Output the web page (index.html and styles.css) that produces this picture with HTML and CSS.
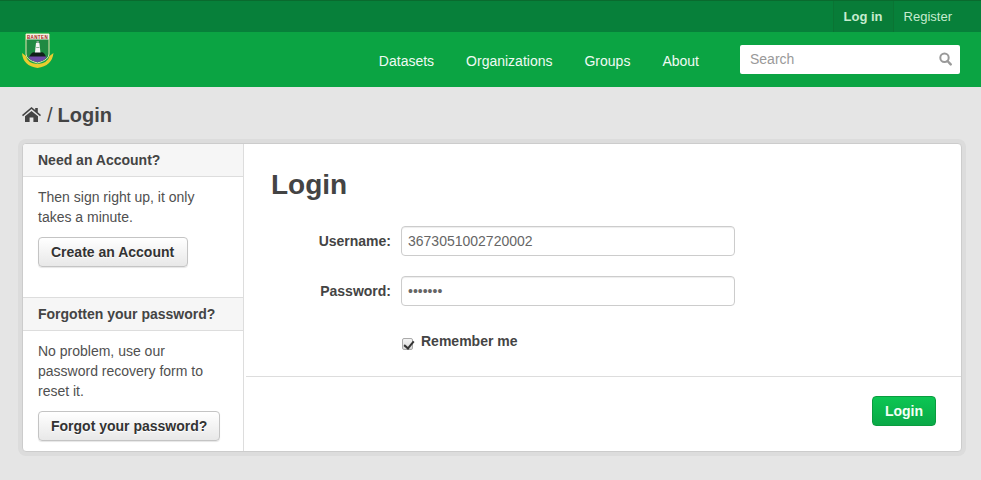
FILE: index.html
```html
<!DOCTYPE html>
<html lang="en">
<head>
<meta charset="utf-8">
<title>Login</title>
<link rel="stylesheet" href="styles.css">
</head>
<body>
<div class="account-bar">
  <div class="account-links">
    <a class="account-link strong" href="#">Log in</a>
    <a class="account-link" href="#">Register</a>
  </div>
</div>
<header class="masthead">
  <a class="logo" href="#" aria-label="Banten">
    <svg width="34" height="36" viewBox="0 0 34 36">
      <path d="M5 1H28V21Q28 27 16.500 30Q5 27 5 21Z" fill="#1f8a42" stroke="#e8e4b0" stroke-width="1"/>
      <rect x="5" y="1" width="23" height="5.500" fill="#f6f1e2"/>
      <text x="16.500" y="5.600" class="logo-text">BANTEN</text>
      <path d="M15 10h3.400l1.100 10h-5.600z" fill="#f4f4f4"/>
      <path d="M15.200 14h3.200v1h-3.200z" fill="#7fb08e"/>
      <path d="M15.500 8h2.400v2h-2.400z" fill="#8fa89a"/>
      <path d="M8 24Q11 18 14 19.500H19.500Q23 18 25 24Z" fill="#10201a"/>
      <path d="M7.500 23.500H25.500Q24 28 16.500 29Q9 28 7.500 23.500Z" fill="#6f4aa8"/>
      <path d="M1 20Q2 33 16.500 35Q31 33 32.500 20L28.500 23Q27 30 16.500 31Q6 30 5 23Z" fill="#e8cc30"/>
    </svg>
  </a>
  <nav class="main-nav">
    <a href="#">Datasets</a>
    <a href="#">Organizations</a>
    <a href="#">Groups</a>
    <a href="#">About</a>
  </nav>
  <form class="site-search">
    <input type="text" placeholder="Search" aria-label="Search">
    <svg class="search-icon" width="13" height="14" viewBox="0 0 13 14"><circle cx="5.500" cy="5.800" r="4.200" fill="none" stroke="#999" stroke-width="2"/><path d="M8.500 9l3.200 3.400" stroke="#999" stroke-width="2.400" stroke-linecap="round"/></svg>
  </form>
</header>
<main class="main">
  <div class="breadcrumb">
    <svg class="home-icon" width="19" height="15" viewBox="0 0 19 15"><path d="M9.500 0L0 8l1 1.200L9.500 2.100 18 9.200 19 8l-3.200-2.700V1h-2.600v2.100z M3 9.300V15h4.600v-4.400h3.800V15H16V9.300L9.500 3.900z" fill="#444"/></svg>
    <span class="sep">/</span>
    <span>Login</span>
  </div>
  <div class="wrapper">
    <aside class="sidebar">
      <section class="module first">
        <h2 class="module-heading">Need an Account?</h2>
        <div class="module-content">
          <p>Then sign right up, it only takes a minute.</p>
          <a class="btn" href="#">Create an Account</a>
        </div>
      </section>
      <section class="module">
        <h2 class="module-heading">Forgotten your password?</h2>
        <div class="module-content">
          <p>No problem, use our password recovery form to reset it.</p>
          <a class="btn" href="#">Forgot your password?</a>
        </div>
      </section>
    </aside>
    <section class="primary">
      <div class="primary-body">
        <h1>Login</h1>
        <form class="login-form">
          <div class="field">
            <label for="u">Username:</label>
            <input id="u" type="text" value="3673051002720002">
          </div>
          <div class="field">
            <label for="p">Password:</label>
            <input id="p" type="password" value="1234567">
          </div>
          <div class="remember">
            <input id="r" type="checkbox" checked>
            <label for="r">Remember me</label>
          </div>
        </form>
      </div>
      <div class="actions">
        <button class="btn-primary" type="button">Login</button>
      </div>
    </section>
  </div>
</main>
</body>
</html>
```
FILE: styles.css
```css
* { box-sizing: border-box; }
html, body { margin: 0; padding: 0; }
body {
  height: 480px;
  overflow: hidden;
  font-family: "Liberation Sans", Arial, sans-serif;
  font-size: 14px;
  line-height: 20px;
  color: #444;
  background: #e5e5e5;
}
a { text-decoration: none; color: inherit; }
.account-bar {
  height: 32px;
  border-top: 1px solid #0a6a2e;
  background: #07803a;
  display: flex;
  justify-content: flex-end;
  padding-right: 19px;
}
.account-links { display: flex; height: 31px; }
.account-link {
  font-size: 13px;
  line-height: 31px;
  color: #c6eccf;
  padding: 0 10px;
  border-left: 1px solid #0a7433;
}
.account-link.strong {
  font-weight: bold;
  background: #087c38;
}
.masthead {
  height: 55px;
  background: #0ba443;
  display: flex;
  align-items: flex-start;
  padding: 0 21px;
}
.logo { display: block; width: 34px; height: 36px; margin-top: 1px; }
.logo-text { font: bold 4.500px "Liberation Sans", sans-serif; fill: #a01818; text-anchor: middle; letter-spacing: .4px; }
.main-nav {
  display: flex;
  gap: 32px;
  margin-left: auto;
  margin-right: 41px;
  margin-top: 19px;
  color: #f0faf3;
}
.main-nav a { line-height: 20px; }
.site-search {
  position: relative;
  width: 220px;
  height: 29px;
  margin-top: 13px;
}
.site-search input {
  width: 100%;
  height: 100%;
  border: 0;
  border-radius: 2px;
  padding: 0 10px 2px;
  font: 14px "Liberation Sans", Arial, sans-serif;
  color: #444;
  background: #fff;
  outline: 0;
}
.site-search input::placeholder { color: #999; opacity: 1; }
.search-icon { position: absolute; right: 8px; top: 7px; }
.main { padding: 0 19px 0 22px; }
.breadcrumb {
  height: 56px;
  display: flex;
  align-items: center;
  gap: 5px;
  font-size: 20px;
  font-weight: bold;
  color: #444;
}
.breadcrumb .sep { font-weight: normal; margin-left: 1px; }
.home-icon { margin-top: -1px; }
.wrapper {
  display: flex;
  height: 309px;
  background: #fff;
  border: 1px solid #ccc;
  border-radius: 4px;
  box-shadow: 0 0 0 4px rgba(0, 0, 0, .04);
  overflow: hidden;
}
.sidebar {
  width: 221px;
  flex: none;
  border-right: 1px solid #ddd;
}
.module-heading {
  margin: 0;
  height: 34px;
  padding: 6px 15px 0;
  font-size: 14px;
  line-height: 20px;
  font-weight: bold;
  color: #444;
  background: #f6f6f6;
  border-top: 1px solid #ddd;
  border-bottom: 1px solid #ddd;
}
.module.first .module-heading { height: 33px; border-top: 0; }
.module-content { padding: 10px 15px 0; }
.module-content p { margin: 0 0 10px; color: #505050; }
.module.first .module-content { height: 120px; }
.module.first .btn { padding-right: 13px; }
.btn {
  display: inline-block;
  height: 30px;
  padding: 0 12px;
  font-weight: bold;
  line-height: 28px;
  color: #333;
  border: 1px solid #c4c4c4;
  border-radius: 4px;
  background: linear-gradient(#fff, #e8e8e8);
  box-shadow: 0 1px 1px rgba(0, 0, 0, .1);
  text-shadow: 0 1px 1px #fff;
}
.primary { flex: 1; display: flex; flex-direction: column; }
.primary-body { height: 233px; padding: 24px 27px 0; position: relative; }
.primary-body::after {
  content: "";
  position: absolute;
  left: 2px;
  right: 0;
  bottom: 0;
  border-bottom: 1px solid #ddd;
}
h1 {
  margin: 0 0 24px;
  font-size: 28px;
  line-height: 34px;
  font-weight: bold;
  color: #444;
}
.field { display: flex; align-items: center; gap: 10px; height: 30px; margin-bottom: 20px; }
.field label { width: 120px; text-align: right; font-weight: bold; }
.field input {
  width: 334px;
  height: 30px;
  padding: 4px 6px;
  font: 14px "Liberation Sans", Arial, sans-serif;
  color: #666;
  border: 1px solid #ccc;
  border-radius: 4px;
  box-shadow: inset 0 1px 1px rgba(0, 0, 0, .075);
  outline: 0;
}
.remember { display: flex; align-items: center; margin-left: 130px; height: 20px; margin-top: 25px; }
.remember input {
  appearance: none;
  width: 11px;
  height: 12px;
  margin: 6px 8px 0 1px;
  border: 1px solid #aaa;
  border-radius: 2px;
  background: linear-gradient(#f4f4f4, #d8d8d8);
  position: relative;
}
.remember input:checked::after {
  content: "";
  position: absolute;
  left: 3px;
  top: 0;
  width: 4px;
  height: 8px;
  border: solid #333;
  border-width: 0 2px 2px 0;
  transform: rotate(40deg);
}
.remember label { font-weight: bold; }
.actions { flex: 1; display: flex; justify-content: flex-end; align-items: flex-start; padding: 19px 25px 0 0; }
.btn-primary {
  width: 64px;
  height: 30px;
  font: bold 14px "Liberation Sans", Arial, sans-serif;
  color: #f4fff7;
  border: 1px solid #0a9c3f;
  border-radius: 4px;
  background: linear-gradient(#0cc653, #0aa947);
  padding: 0;
}
```
